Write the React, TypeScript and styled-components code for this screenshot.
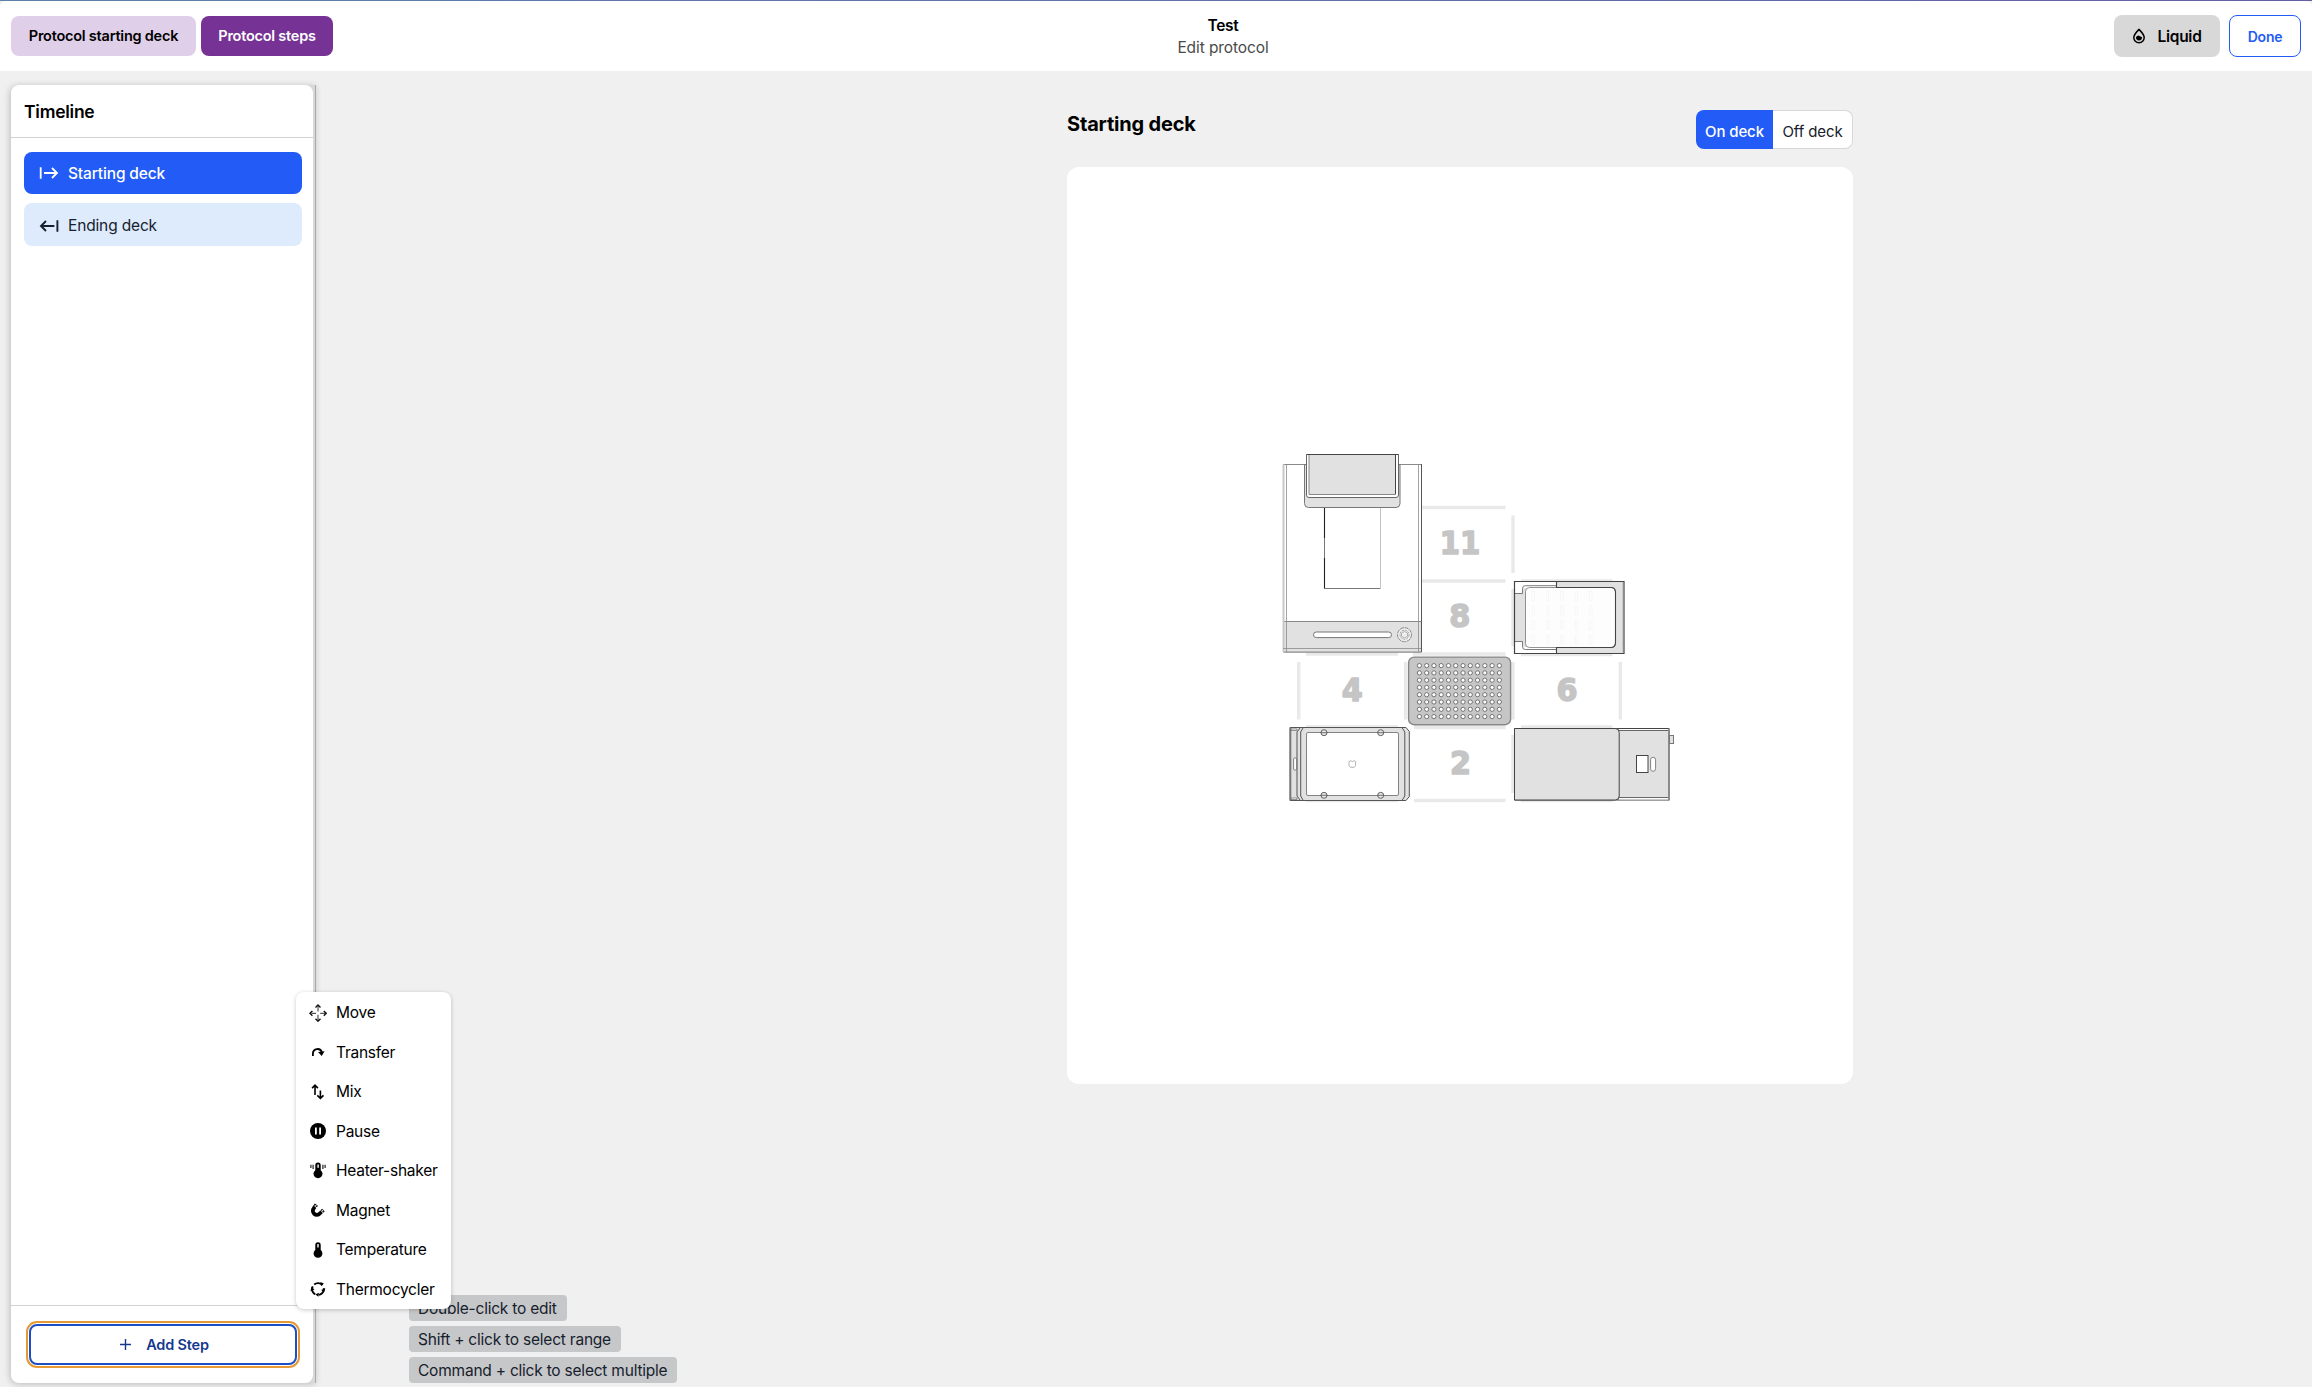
import React from 'react';
import styled, { createGlobalStyle, css } from 'styled-components';

const GlobalStyle = createGlobalStyle`
  *, *::before, *::after { box-sizing: border-box; }
  html, body { margin: 0; padding: 0; overflow: hidden; }
  body {
    font-family: Inter, 'Noto Sans', sans-serif;
    font-size: 15.5px;
    color: #000;
    background: #f0f0f0;
  }
  button { font: inherit; color: inherit; margin: 0; padding: 0; border: 0; background: none; }
  svg { display: block; flex: none; }
`;

const Page = styled.div`
  width: 2312px;
  height: 1387px;
  display: flex;
  flex-direction: column;
  background: #f0f0f0;
`;

const TopEdge = styled.div`
  height: 1px;
  flex: none;
  background: linear-gradient(90deg, #5b82a8, #6272aa 50%, #6160a6);
`;

const Header = styled.header`
  height: 70px;
  flex: none;
  display: grid;
  grid-template-columns: 1fr auto 1fr;
  padding: 0 11px;
  background: #fff;
  border-radius: 6px 6px 0 0;
`;

const TabGroup = styled.nav`
  display: flex;
  gap: 5px;
  padding-top: 15px;
`;

const Tab = styled.button<{ $active?: boolean; $width: number }>`
  width: ${p => p.$width}px;
  height: 40px;
  padding-bottom: 1px;
  border-radius: 8px;
  font-size: 14.5px;
  font-weight: 600;
  letter-spacing: -0.23px;
  white-space: nowrap;
  color: ${p => (p.$active ? '#fff' : '#000')};
  background: ${p => (p.$active ? '#763294' : '#e0cfe8')};
`;

const TitleBlock = styled.div`
  display: flex;
  flex-direction: column;
  align-items: center;
  padding: 14px 0 0 134px;
  line-height: 22px;
`;

const Title = styled.span`
  font-size: 15.5px;
  font-weight: 600;
  letter-spacing: -0.25px;
`;

const Subtitle = styled.span`
  color: #4a4a4a;
  font-size: 15.5px;
  letter-spacing: -0.1px;
`;

const Actions = styled.div`
  display: flex;
  justify-content: flex-end;
  gap: 9px;
  padding-top: 14px;
`;

const ActionButton = styled.button<{ $outline?: boolean }>`
  height: 42px;
  width: ${p => (p.$outline ? 72 : 106)}px;
  display: flex;
  align-items: center;
  justify-content: center;
  gap: 11px;
  border-radius: 8px;
  font-size: ${p => (p.$outline ? 14 : 15.5)}px;
  font-weight: 600;
  letter-spacing: ${p => (p.$outline ? '-0.2px' : '-0.25px')};
  ${p =>
    p.$outline
      ? css`
          color: #245bf5;
          border: 1px solid #245bf5;
          background: #fff;
        `
      : css`
          background: #d8d8d8;
        `}
`;

const Body = styled.div`
  flex: 1;
  min-height: 0;
  display: flex;
  padding: 14px 0 4px 11px;
`;

const SidebarFrame = styled.div`
  position: relative;
  display: flex;
  width: 305px;
  flex: none;
  border-right: 1px solid #a9a9a9;
  background: #d8d8d8;
  border-radius: 8px 0 0 8px;
  padding-right: 2px;
  box-shadow: -1px 1px 7px rgba(0, 0, 0, 0.22);
`;

const Sidebar = styled.aside`
  flex: 1;
  display: flex;
  flex-direction: column;
  border-radius: 8px;
  background: #fff;
`;

const SidebarTitle = styled.div`
  height: 53px;
  display: flex;
  align-items: center;
  padding: 0 13px;
  border-bottom: 1px solid #d2d2d2;
  font-size: 17.5px;
  font-weight: 600;
  letter-spacing: -0.25px;
`;

const StepList = styled.div`
  flex: 1;
  display: flex;
  flex-direction: column;
  gap: 9px;
  padding: 14px 11px 0 13px;
`;

const StepItem = styled.button<{ $active?: boolean }>`
  height: ${p => (p.$active ? 42 : 43)}px;
  display: flex;
  align-items: center;
  gap: 9px;
  padding: ${p => (p.$active ? '0' : '2px')} 0 0 14px;
  border-radius: 8px;
  font-size: 15.5px;
  font-weight: ${p => (p.$active ? 500 : 400)};
  letter-spacing: -0.15px;
  color: ${p => (p.$active ? '#fff' : '#16212d')};
  background: ${p => (p.$active ? '#225bf5' : '#deebfd')};
`;

const SidebarFooter = styled.div`
  height: 78px;
  display: flex;
  padding: 18px 16px 18px 18px;
  border-top: 1px solid #d2d2d2;
`;

const AddStepButton = styled.button`
  flex: 1;
  display: flex;
  align-items: center;
  justify-content: center;
  gap: 15px;
  padding: 0 0 1px 3px;
  color: #16388f;
  border: 2px solid #1d4fc4;
  border-radius: 8px;
  background: #fff;
  outline: 2px solid #e79a33;
  outline-offset: 1px;
  font-size: 14.5px;
  font-weight: 600;
  letter-spacing: -0.2px;
`;

const StepMenu = styled.ul`
  position: absolute;
  left: 285px;
  top: 907px;
  width: 155px;
  height: 317px;
  margin: 0;
  padding: 1px 0 0 13px;
  list-style: none;
  border-radius: 8px;
  background: #fff;
  box-shadow: 0 1px 4px rgba(0, 0, 0, 0.22);
`;

const StepMenuItem = styled.li`
  height: 39.5px;
  display: flex;
  align-items: center;
  gap: 9px;
  font-size: 15.5px;
  letter-spacing: -0.25px;
  white-space: nowrap;
`;

const Workspace = styled.main`
  flex: 1;
  display: flex;
  flex-direction: column;
  justify-content: space-between;
`;

const DeckSection = styled.section`
  width: 786px;
  margin: 25px 0 0 751px;
`;

const DeckHeader = styled.div`
  display: flex;
  justify-content: space-between;
  height: 57px;
`;

const DeckTitle = styled.h1`
  margin: 0;
  font-size: 20px;
  font-weight: 700;
  line-height: 28px;
  letter-spacing: -0.18px;
`;

const Toggle = styled.div`
  display: flex;
  height: 39px;
`;

const ToggleOption = styled.button<{ $active?: boolean }>`
  width: ${p => (p.$active ? 77 : 80)}px;
  padding-top: 4px;
  border-radius: ${p => (p.$active ? '8px 0 0 8px' : '0 8px 8px 0')};
  border: ${p => (p.$active ? '0' : '1px solid #d8d8d8')};
  border-left: 0;
  font-size: 15px;
  font-weight: ${p => (p.$active ? 500 : 400)};
  letter-spacing: -0.1px;
  color: ${p => (p.$active ? '#fff' : '#16212d')};
  background: ${p => (p.$active ? '#225bf5' : '#fff')};
`;

const DeckCard = styled.div`
  height: 917px;
  display: flex;
  align-items: center;
  justify-content: center;
  border-radius: 12px;
  background: #fff;
`;

const Hints = styled.div`
  display: flex;
  flex-direction: column;
  align-items: flex-start;
  gap: 5px;
  padding-left: 93px;
`;

const Hint = styled.span<{ $width: number }>`
  width: ${p => p.$width}px;
  height: 26px;
  padding-left: 9px;
  border-radius: 4px;
  line-height: 27px;
  font-size: 15.5px;
  letter-spacing: -0.22px;
  white-space: nowrap;
  color: #16212d;
  background: #c6c7c9;
`;

const StartIcon = () => (
  <svg width="21" height="16" viewBox="0 0 21 16" fill="none" stroke="currentColor" strokeWidth="1.8">
    <path d="M2.7 2.3v11.4M6 8h12.8M14 3l5 5-5 5" />
  </svg>
);

const EndIcon = () => (
  <svg width="21" height="16" viewBox="0 0 21 16" fill="none" stroke="currentColor" strokeWidth="1.9">
    <path d="M19.4 2.3v11.4M16.4 8H3.4M8 3L3 8l5 5" />
  </svg>
);

const LiquidIcon = () => (
  <svg width="14" height="16" viewBox="0 0 14 16">
    <path d="M7 1.4C4.2 4.3 1.8 6.7 1.8 9.6a5.2 5.2 0 0 0 10.4 0C12.2 6.7 9.8 4.3 7 1.4z" fill="none" stroke="#000" strokeWidth="1.5" />
    <path d="M3.9 9.3q1.6-2.2 3.1-1.6t3.1 1.6a3.1 3.1 0 0 1-6.2 0z" fill="#000" />
  </svg>
);

const PlusIcon = () => (
  <svg width="11" height="11" viewBox="0 0 11 11" stroke="currentColor" strokeWidth="1.4">
    <path d="M5.5 0v11M0 5.5h11" />
  </svg>
);

const glyphs: Record<string, React.ReactNode> = {
  Move: (
    <>
      <path d="M9 2v5.6M9 10.8V16M2.5 9.3H7M11.2 9.3h4.8" fill="none" stroke="#555" strokeWidth="1.2" />
      <path d="M6.5 3.5L9 1l2.5 2.5M6.5 14.8L9 17.2l2.5-2.4M3.4 6.9L1 9.3l2.4 2.4M14.8 6.9l2.4 2.4-2.4 2.4" fill="none" stroke="#111" strokeWidth="1.4" />
    </>
  ),
  Transfer: (
    <>
      <path d="M3.9 13v-2.4a4.6 4.6 0 0 1 9-1.3" fill="none" stroke="#000" strokeWidth="1.8" />
      <path d="M9 9l6.6-.8-2.9 4.8z" />
    </>
  ),
  Mix: (
    <path d="M6 12V2.4M3.1 5.1L6 2.2l2.9 2.9M11.4 7.4v8M8.3 12.4l3.1 3 3.1-3" fill="none" stroke="#000" strokeWidth="1.6" />
  ),
  Pause: (
    <>
      <circle cx="9" cy="9" r="8" />
      <path d="M6.9 5.5v7M11.1 5.5v7" stroke="#fff" strokeWidth="1.8" />
    </>
  ),
  'Heater-shaker': (
    <>
      <path d="M9 .5a2.7 2.7 0 0 0-2.7 2.7v5a4.5 4.5 0 1 0 5.4 0v-5A2.7 2.7 0 0 0 9 .5z" />
      <path d="M9.1 2.4v3.4" stroke="#fff" strokeWidth="1.4" />
      <path d="M4.1 2.7V7M1.9 2.7v3.4M13.9 2.7V7M16.1 2.7v3.4" stroke="#333" strokeWidth="1.3" />
    </>
  ),
  Magnet: (
    <>
      <path d="M7.4 3.6L4.9 7.1a3.9 3.9 0 0 0 5.9 5.4L14.4 9" fill="none" stroke="#000" strokeWidth="3.8" />
      <path d="M5.3 4.9l2.7 1.9M11.7 9.2l2.2 2.6" stroke="#fff" strokeWidth=".9" />
      <path d="M7.1 4.1l-.5.7M13.4 10l.6-.6" stroke="#fff" strokeWidth="1.6" />
    </>
  ),
  Temperature: (
    <>
      <path d="M9 1.3a2.7 2.7 0 0 0-2.7 2.7v5a4.4 4.4 0 1 0 5.4 0V4A2.7 2.7 0 0 0 9 1.3z" />
      <path d="M9 3v3.6" stroke="#fff" strokeWidth="1.4" />
    </>
  ),
  Thermocycler: (
    <>
      <circle cx="9" cy="9" r="5.9" fill="none" stroke="#000" strokeWidth="1.9" strokeDasharray="9 3.36" transform="rotate(-130 9 9)" />
      <path d="M11.4 2l3.5 1.6-2.9 2.4zM16.4 8.4l-1.6 3.8-2.7-2.2zM9.8 12.8l-.3 4-3.2-2.4zM1.4 11l1.1-4 3 2.5z" />
    </>
  ),
};

const MenuGlyph = ({ name }: { name: string }) => (
  <svg width="18" height="18" viewBox="0 0 18 18">{glyphs[name]}</svg>
);

const stepTypes = ['Move', 'Transfer', 'Mix', 'Pause', 'Heater-shaker', 'Magnet', 'Temperature', 'Thermocycler'];

const slotMarks =
  'M1422 507.5H1505.5M1422 581H1505.5M1306 654H1398M1413 654H1505.5M1521 581H1612.5M1521 654.5H1612.5' +
  'M1306 727H1398M1414 727.5H1505.5M1521 727H1612.5M1306 800.5H1398M1414 800.5H1505.5M1521 800.5H1612.5' +
  'M1513 515.5V573M1513 589V646.5M1513 662V719.5M1513 735V793M1298.7 662V719.5M1405.5 662V719.5M1620.3 662V719.5';

const slotLabels = [
  { text: '11', x: 1439.8, y: 553.6, w: 40.5 },
  { text: '8', x: 1449.3, y: 627.1, w: 21 },
  { text: '4', x: 1341.8, y: 700.6, w: 21 },
  { text: '6', x: 1556.6, y: 700.6, w: 21 },
  { text: '2', x: 1450, y: 774.1, w: 21 },
];

const Thermocycler = () => (
  <g fill="#fff" stroke="#8a8a8a">
    <path d="M1283.5 464.5H1421.5V652H1283.5z" />
    <path d="M1283.5 621.5H1421.5V652H1283.5z" fill="#e1e1e1" />
    <path d="M1283.5 464.5V652" stroke="#c8c8c8" strokeWidth="2" />
    <path d="M1286.5 464V652M1418.5 464V652M1283 648.5H1421" strokeWidth=".8" />
    <path d="M1421.5 464V652" stroke="#555" />
    <path d="M1304.5 464.5V503.5q0 4 4 4H1396q4 0 4-4V464.5z" fill="#e1e1e1" stroke="#777" />
    <path d="M1306.5 454.5V495q0 2.5 2.5 2.5H1396q2.5 0 2.5-2.5V454.5z" stroke="#666" />
    <path d="M1309 454.5H1395.5V494.5H1309z" fill="#e1e1e1" stroke="#888" />
    <path d="M1306.5 454.5H1398.5M1395.5 454V494" stroke="#444" fill="none" />
    <path d="M1380.5 508V588" stroke="#c4c4c4" />
    <path d="M1324.5 588.5H1380.5" fill="none" stroke="#777" />
    <path d="M1324.5 508V538M1324.5 558V588.5" stroke="#222" strokeWidth="1.1" />
    <path d="M1324.5 538V558" stroke="#777" />
    <rect x="1313.5" y="632" width="78" height="5.6" rx="2.8" stroke="#777" />
    <circle cx="1404.5" cy="634.7" r="7" fill="#eee" stroke="#888" strokeDasharray="4 .7" />
    <circle cx="1404.5" cy="634.7" r="4.5" fill="none" strokeWidth=".8" strokeDasharray="2 1" />
    <path d="M1404.5 631.5l3 1.6v3.2l-3 1.6-3-1.6v-3.2z" fill="none" strokeWidth=".6" />
  </g>
);

const MagneticModule = () => (
  <g fill="none" stroke="#444">
    <path d="M1514.5 581.5H1624V653.5H1514.5z" fill="#fff" stroke="none" />
    <path d="M1556.5 581.5H1624V653.5H1556.5z" fill="#e1e1e1" stroke="none" />
    <path d="M1514.5 593.5H1523V641.5H1514.5z" fill="#e1e1e1" stroke="none" />
    <path d="M1523 588H1528V647H1523z" fill="#e1e1e1" stroke="none" />
    <path d="M1514.5 593.5H1522.5V588.5q0-2.8 2.8-2.8H1556.5M1514.5 641.5H1522.5V646.7q0 2.8 2.8 2.8H1556.5" strokeWidth=".7" />
    <rect x="1525.5" y="587.5" width="90" height="60" rx="4" fill="#fdfdfd" stroke="#777" strokeWidth=".8" />
    <path d="M1556.5 581.5V587.5H1611q4.5 0 4.5 5V642q0 5.5-4.5 5.5H1556.5V653.5" strokeWidth="1.1" />
    <g stroke="#f6f6f6" strokeWidth=".8">
      {[0, 1, 2, 3].map(r => [0, 1, 2, 3, 4].map(c => (
        <rect key={`${r}-${c}`} x={1532 + c * 14.4} y={591.5 + r * 14.5} width="2.4" height="9" />
      )))}
    </g>
    <path d="M1514.5 581.5H1624V653.5H1514.5z" strokeWidth="1.2" />
    <path d="M1622.8 582V653" stroke="#aaa" strokeWidth=".6" />
  </g>
);

const WellPlate = () => (
  <g>
    <rect x="1408.6" y="657.1" width="102" height="67.6" rx="5.5" fill="#c6c6c6" stroke="#868686" strokeWidth="1.4" />
    <g fill="#fff" stroke="#66666a" strokeWidth=".9">
      {Array.from({ length: 8 }, (_, r) =>
        Array.from({ length: 12 }, (_, c) => (
          <circle key={`${r}-${c}`} cx={1419.4 + c * 7.27} cy={665.6 + r * 7.28} r="2.1" />
        )),
      )}
    </g>
  </g>
);

const HeaterShaker = () => (
  <g fill="none" stroke="#555">
    <path d="M1290 727.5H1406L1409.3 731.5V796.5L1406 800.5H1290z" fill="#e1e1e1" />
    <path d="M1291.3 729H1297V730.5H1291zM1291.3 798H1297V799.5H1291z" fill="#fff" strokeWidth=".6" />
    <path d="M1290.5 727.5V800.5" stroke="#777" strokeWidth="1.6" />
    <path d="M1300 728L1297 732V796L1300 800M1303 728L1300.7 732V796L1303 800M1402.3 728L1404.8 732V796L1402.3 800" />
    <rect x="1306.5" y="732.5" width="92" height="63" rx="1.5" fill="#fff" strokeWidth=".7" />
    <rect x="1293.6" y="758" width="3" height="12" rx="1" fill="#fff" strokeWidth=".7" />
    {[[1324, 732.7], [1380.7, 732.7], [1324, 795.3], [1380.7, 795.3]].map(([x, y]) => (
      <g key={`${x}-${y}`}>
        <circle cx={x} cy={y} r="3" fill="#e6e6e6" strokeWidth=".9" />
        <path d={`M${x - 3.5} ${y}h7`} strokeWidth=".8" />
      </g>
    ))}
    <path d="M1349 761.5l1.5-.7 1.8.6 1.8-.6 1.5.7v4.2l-1.4 1.6h-3.8l-1.4-1.6z" stroke="#a0a0a0" strokeWidth=".8" />
  </g>
);

const TemperatureModule = () => (
  <g fill="#e1e1e1" stroke="#444">
    <path d="M1514.5 728.5H1669V800H1514.5z" />
    <path d="M1619 729H1668.5V730.6H1619zM1619 797.4H1668.5V799.5H1619z" fill="#fff" stroke="none" />
    <path d="M1618 730.5H1668.5M1618 797.5H1668.5" strokeWidth=".8" />
    <path d="M1669 728.5V800.5" stroke="#888" strokeWidth="1.6" />
    <path d="M1514.5 728.5H1615.2q4 0 4 4V796q0 4-4 4H1514.5z" />
    <rect x="1669.5" y="735.5" width="4" height="8" stroke="#777" />
    <rect x="1636.5" y="755.5" width="11.5" height="17" fill="#fff" />
    <rect x="1650.6" y="757.3" width="5" height="14" rx="2.5" fill="#fff" stroke="#777" strokeWidth=".9" />
  </g>
);

const DeckMap = () => (
  <svg width="440" height="361" viewBox="1240 445 440 361">
    <path d={slotMarks} stroke="#e9e9e9" strokeWidth="3.3" />
    <g fill="#c5c5c5" stroke="#c5c5c5" strokeWidth="1.6" strokeLinejoin="round" fontFamily="'DejaVu Sans', sans-serif" fontWeight="700" fontSize="32">
      {slotLabels.map(l => (
        <text key={l.text} x={l.x} y={l.y} textLength={l.w} lengthAdjust="spacingAndGlyphs">{l.text}</text>
      ))}
    </g>
    <Thermocycler />
    <MagneticModule />
    <WellPlate />
    <HeaterShaker />
    <TemperatureModule />
  </svg>
);

export default function App() {
  return (
    <Page>
      <GlobalStyle />
      <TopEdge />
      <Header>
        <TabGroup>
          <Tab $width={185}>Protocol starting deck</Tab>
          <Tab $active $width={132}>Protocol steps</Tab>
        </TabGroup>
        <TitleBlock>
          <Title>Test</Title>
          <Subtitle>Edit protocol</Subtitle>
        </TitleBlock>
        <Actions>
          <ActionButton><LiquidIcon />Liquid</ActionButton>
          <ActionButton $outline>Done</ActionButton>
        </Actions>
      </Header>
      <Body>
        <SidebarFrame>
          <Sidebar>
            <SidebarTitle>Timeline</SidebarTitle>
            <StepList>
              <StepItem $active><StartIcon />Starting deck</StepItem>
              <StepItem><EndIcon />Ending deck</StepItem>
            </StepList>
            <SidebarFooter>
              <AddStepButton><PlusIcon />Add Step</AddStepButton>
            </SidebarFooter>
          </Sidebar>
          <StepMenu>
            {stepTypes.map(name => (
              <StepMenuItem key={name}><MenuGlyph name={name} />{name}</StepMenuItem>
            ))}
          </StepMenu>
        </SidebarFrame>
        <Workspace>
          <DeckSection>
            <DeckHeader>
              <DeckTitle>Starting deck</DeckTitle>
              <Toggle>
                <ToggleOption $active>On deck</ToggleOption>
                <ToggleOption>Off deck</ToggleOption>
              </Toggle>
            </DeckHeader>
            <DeckCard><DeckMap /></DeckCard>
          </DeckSection>
          <Hints>
            <Hint $width={158}>Double-click to edit</Hint>
            <Hint $width={212}>Shift + click to select range</Hint>
            <Hint $width={268}>Command + click to select multiple</Hint>
          </Hints>
        </Workspace>
      </Body>
    </Page>
  );
}
